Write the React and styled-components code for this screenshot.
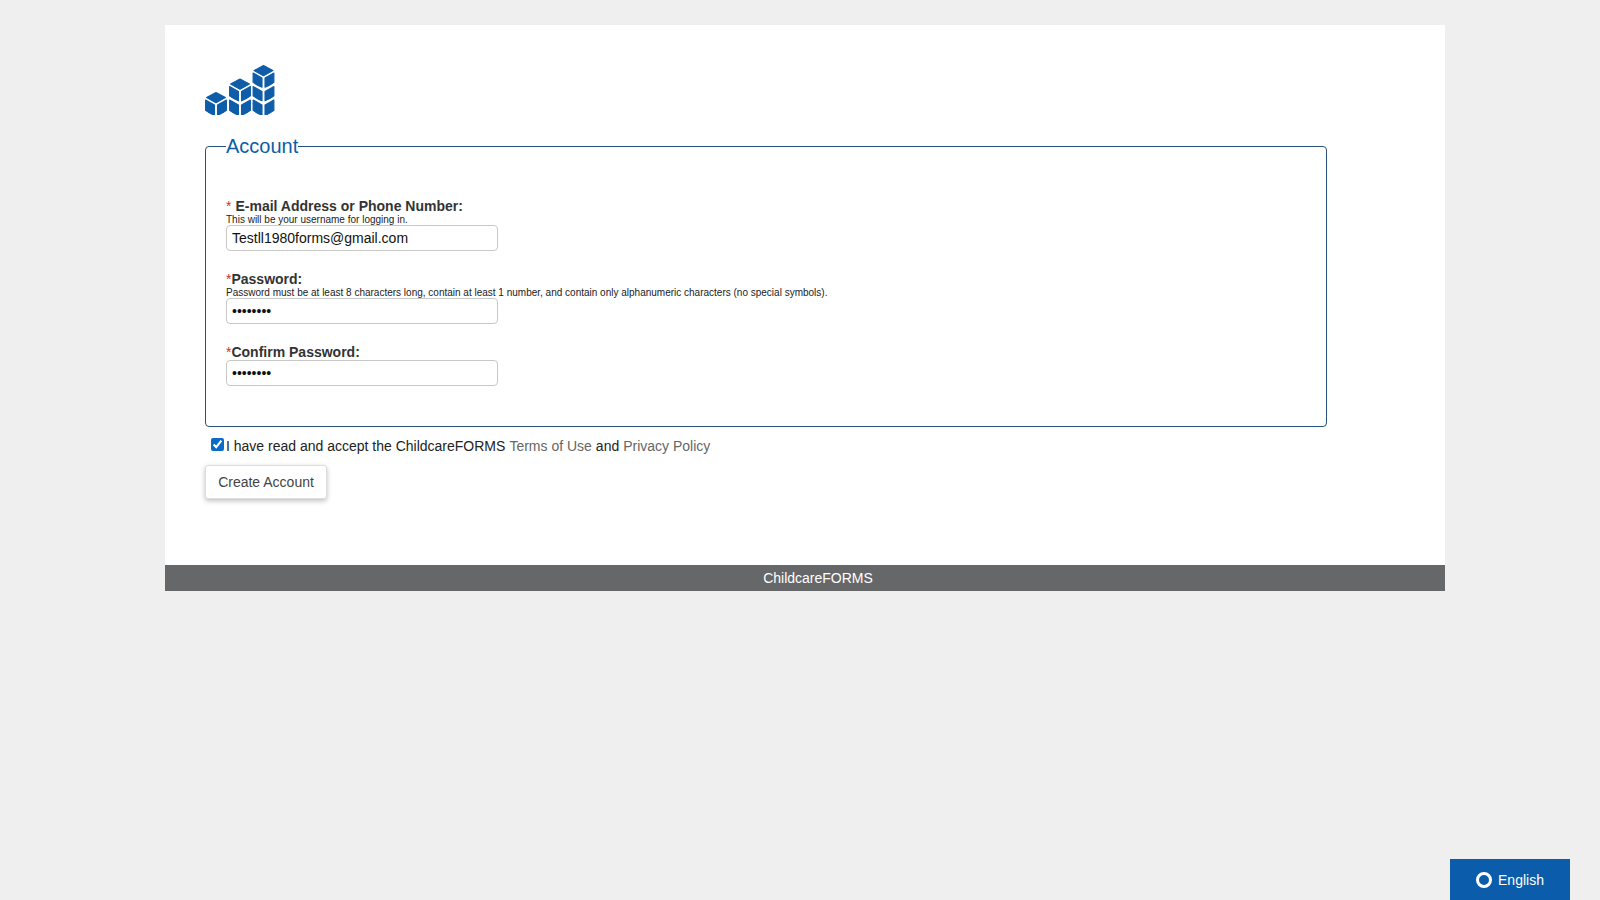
import styled, { createGlobalStyle } from 'styled-components';

const GlobalStyle = createGlobalStyle`
  html, body {
    margin: 0;
    padding: 0;
    background: #efefef;
    font-family: "Liberation Sans", Arial, sans-serif;
  }
`;

const Page = styled.div`
  width: 1600px;
  height: 900px;
  padding-top: 25px;
  box-sizing: border-box;
  overflow: hidden;
  position: relative;
`;

const Card = styled.main`
  width: 1280px;
  margin-left: 165px;
  background: #fff;
`;

const Content = styled.div`
  height: 540px;
  padding: 40px 0 0 40px;
  box-sizing: border-box;
`;

const LogoSvg = styled.svg`
  display: block;
  width: 70px;
  height: 50px;
`;

const FieldBox = styled.fieldset`
  width: 1122px;
  height: 292px;
  margin: 20px 0 0;
  padding: 0 20px;
  box-sizing: border-box;
  border: 1px solid #2a5578;
  border-radius: 4px;
`;

const Legend = styled.legend`
  padding: 0;
  font-size: 20px;
  line-height: 23px;
  color: #0b5ea8;
`;

const Field = styled.div`
  margin-top: ${(p) => p.$top}px;
`;

const Label = styled.label`
  display: block;
  font-size: 14px;
  line-height: 16px;
  font-weight: bold;
  color: #333;
`;

const Star = styled.span`
  color: #c8342c;
  font-weight: normal;
  margin-right: ${(p) => (p.$gap ? 4 : 0)}px;
`;

const Hint = styled.div`
  font-size: 10px;
  line-height: 10px;
  margin-top: 1px;
  color: #222;
`;

const TextInput = styled.input`
  display: block;
  width: 272px;
  height: 26px;
  padding: 0 5px;
  box-sizing: border-box;
  border: 1px solid #c8c8c8;
  border-radius: 4px;
  background: #fff;
  font-family: "Liberation Sans", Arial, sans-serif;
  font-size: 14px;
  color: #111;
  outline: none;
`;

const AcceptRow = styled.div`
  display: flex;
  align-items: center;
  height: 20px;
  margin: 9px 0 0 6px;
  font-size: 14px;
  color: #222;
`;

const Check = styled.input`
  width: 13px;
  height: 13px;
  margin: 0 2px 3px 0;
  accent-color: #0b6bcb;
`;

const TextLink = styled.a`
  color: #666;
  text-decoration: none;
  margin: 0 4px;
`;

const CreateButton = styled.button`
  display: block;
  width: 122px;
  height: 34px;
  margin-top: 9px;
  padding: 0;
  border: 1px solid #ddd;
  border-radius: 3px;
  background: #fff;
  box-shadow: 0 2px 5px rgba(0, 0, 0, 0.25);
  font-family: "Liberation Sans", Arial, sans-serif;
  font-size: 14px;
  color: #444;
`;

const Footer = styled.footer`
  height: 26px;
  padding-left: 26px;
  background: #666769;
  color: #fff;
  font-size: 14px;
  line-height: 26px;
  text-align: center;
`;

const LangButton = styled.button`
  position: absolute;
  left: 1450px;
  top: 859px;
  width: 120px;
  height: 41px;
  display: flex;
  align-items: center;
  justify-content: center;
  gap: 6px;
  border: 0;
  padding: 0;
  background: #0b5cab;
  color: #fff;
  font-family: "Liberation Sans", Arial, sans-serif;
  font-size: 14px;
`;

const LangRing = styled.span`
  width: 10px;
  height: 10px;
  border: 3px solid #fff;
  border-radius: 50%;
`;

// one cube column: top face, then pairs of side faces going down
const CubeColumn = ({ cx, top, levels }) => {
  const faces = [];
  faces.push(`M${cx} ${top + 0.6}l9.4 5-9.4 5.2-9.4-5.2z`);
  for (let i = 0; i < levels; i++) {
    const y = top + 8 + i * 13.5;
    const h = i === levels - 1 ? 9.4 : 8.4;
    faces.push(`M${cx - 10.4} ${y}l8.9 4.9v${h + 1}c-3.6-1.4-6.2-2.9-8.9-4.9z`);
    faces.push(`M${cx + 10.4} ${y}l-8.9 4.9v${h + 1}c3.6-1.4 6.2-2.9 8.9-4.9z`);
  }
  return faces.map((d) => <path key={d} d={d} />);
};

const Logo = () => (
  <LogoSvg viewBox="0 0 70 50" fill="#0f5ca8" stroke="#0f5ca8" strokeWidth="1.1" strokeLinejoin="round">
    <CubeColumn cx={11} top={27} levels={1} />
    <CubeColumn cx={35} top={13.5} levels={2} />
    <CubeColumn cx={58.5} top={0} levels={3} />
  </LogoSvg>
);

export default function App() {
  return (
    <Page>
      <GlobalStyle />
      <Card>
        <Content>
          <Logo />
          <FieldBox>
            <Legend>Account</Legend>
            <Field $top={40}>
              <Label><Star $gap>*</Star>E-mail Address or Phone Number:</Label>
              <Hint>This will be your username for logging in.</Hint>
              <TextInput type="text" defaultValue="Testll1980forms@gmail.com" />
            </Field>
            <Field $top={20}>
              <Label><Star>*</Star>Password:</Label>
              <Hint>Password must be at least 8 characters long, contain at least 1 number, and contain only alphanumeric characters (no special symbols).</Hint>
              <TextInput type="password" defaultValue="password" />
            </Field>
            <Field $top={20}>
              <Label><Star>*</Star>Confirm Password:</Label>
              <TextInput type="password" defaultValue="password" />
            </Field>
          </FieldBox>
          <AcceptRow>
            <Check type="checkbox" defaultChecked />
            I have read and accept the ChildcareFORMS
            <TextLink>Terms of Use</TextLink>
            and
            <TextLink>Privacy Policy</TextLink>
          </AcceptRow>
          <CreateButton>Create Account</CreateButton>
        </Content>
        <Footer>ChildcareFORMS</Footer>
      </Card>
      <LangButton><LangRing />English</LangButton>
    </Page>
  );
}
